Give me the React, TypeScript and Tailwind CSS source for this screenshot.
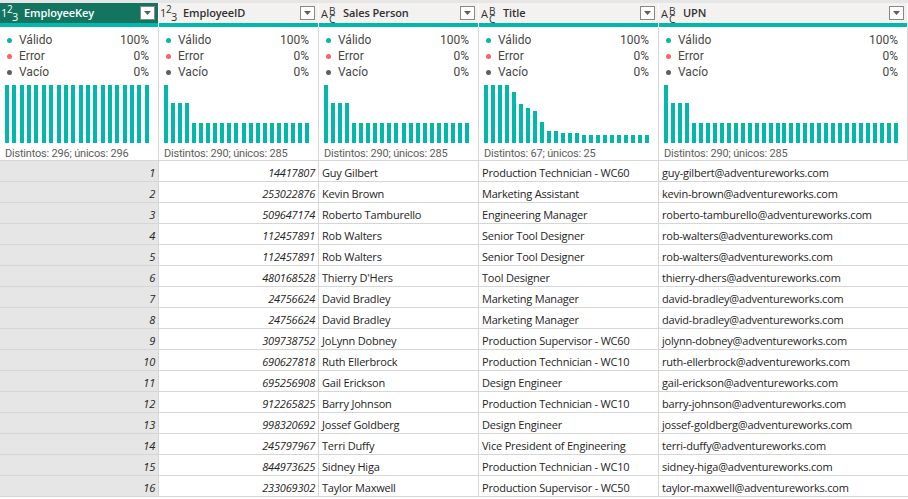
import React from "react";

const TEAL = "#01b8aa";

type Col = {
  name: string;
  type: "num" | "text";
  distinct: string;
  bars: number[];
};

const low = (n: number) => Array.from({ length: n }, () => 0.35);

const cols: Col[] = [
  { name: "EmployeeKey", type: "num", distinct: "Distintos: 296; únicos: 296", bars: Array.from({ length: 20 }, () => 1) },
  { name: "EmployeeID", type: "num", distinct: "Distintos: 290; únicos: 285", bars: [1, 0.69, 0.69, 0.69, ...low(17)] },
  { name: "Sales Person", type: "text", distinct: "Distintos: 290; únicos: 285", bars: [1, 0.69, 0.69, 0.69, ...low(17)] },
  {
    name: "Title",
    type: "text",
    distinct: "Distintos: 67; únicos: 25",
    bars: [1, 1, 1, 1, 0.88, 0.67, 0.6, 0.55, 0.37, 0.21, 0.21, 0.17, 0.17, 0.17, 0.13, 0.13, 0.13, 0.13, 0.13, 0.13, 0.13, 0.13, 0.13, 0.13],
  },
  { name: "UPN", type: "text", distinct: "Distintos: 290; únicos: 285", bars: [1, 0.69, 0.69, 0.69, ...low(30)] },
];

const rows: [string, string, string, string][] = [
  ["14417807", "Guy Gilbert", "Production Technician - WC60", "guy-gilbert@adventureworks.com"],
  ["253022876", "Kevin Brown", "Marketing Assistant", "kevin-brown@adventureworks.com"],
  ["509647174", "Roberto Tamburello", "Engineering Manager", "roberto-tamburello@adventureworks.com"],
  ["112457891", "Rob Walters", "Senior Tool Designer", "rob-walters@adventureworks.com"],
  ["112457891", "Rob Walters", "Senior Tool Designer", "rob-walters@adventureworks.com"],
  ["480168528", "Thierry D'Hers", "Tool Designer", "thierry-dhers@adventureworks.com"],
  ["24756624", "David Bradley", "Marketing Manager", "david-bradley@adventureworks.com"],
  ["24756624", "David Bradley", "Marketing Manager", "david-bradley@adventureworks.com"],
  ["309738752", "JoLynn Dobney", "Production Supervisor - WC60", "jolynn-dobney@adventureworks.com"],
  ["690627818", "Ruth Ellerbrock", "Production Technician - WC10", "ruth-ellerbrock@adventureworks.com"],
  ["695256908", "Gail Erickson", "Design Engineer", "gail-erickson@adventureworks.com"],
  ["912265825", "Barry Johnson", "Production Technician - WC10", "barry-johnson@adventureworks.com"],
  ["998320692", "Jossef Goldberg", "Design Engineer", "jossef-goldberg@adventureworks.com"],
  ["245797967", "Terri Duffy", "Vice President of Engineering", "terri-duffy@adventureworks.com"],
  ["844973625", "Sidney Higa", "Production Technician - WC10", "sidney-higa@adventureworks.com"],
  ["233069302", "Taylor Maxwell", "Production Supervisor - WC50", "taylor-maxwell@adventureworks.com"],
];

const GRID = "grid grid-cols-[159px_160px_160px_180px_1fr]";
const UI_FONT = { fontFamily: "'Open Sans', 'Noto Sans', sans-serif" };
const DIN_FONT = { fontFamily: "Roboto, 'Noto Sans', sans-serif" };

function TypeIcon({ type, selected }: { type: "num" | "text"; selected: boolean }) {
  const c = selected ? "text-white" : "text-[#323130]";
  if (type === "num") {
    return (
      <span className={`relative shrink-0 block w-[22px] h-[20px] ${c}`} style={UI_FONT}>
        <span className="absolute left-[1px] top-[6px] text-[11px] leading-[8px]">1</span>
        <span className="absolute left-[7px] top-[3px] text-[10px] leading-[7px]">2</span>
        <span className="absolute left-[12px] top-[10px] text-[11px] leading-[8px]">3</span>
      </span>
    );
  }
  return (
    <span className={`relative shrink-0 block w-[22px] h-[20px] ${c}`} style={UI_FONT}>
      <span className="absolute left-[2px] top-[7px] text-[11px] leading-[8px]">A</span>
      <span className="absolute left-[10px] top-[4px] text-[10px] leading-[8px] whitespace-pre text-center">{"B\nC"}</span>
    </span>
  );
}

function Dropdown() {
  return (
    <div className="shrink-0 w-[15px] h-[14px] bg-white border border-[#8a8886] flex items-center justify-center">
      <svg width="7" height="4" viewBox="0 0 7 4">
        <path d="M0 0 L7 0 L3.5 4 Z" fill="#605e5c" />
      </svg>
    </div>
  );
}

export default function App() {
  return (
    <div className="w-[908px] h-[499px] overflow-hidden bg-white text-[#252423]" style={UI_FONT}>
      {/* header */}
      <div className={`${GRID} bg-[#e6e6e6] pt-[3px]`}>
        {cols.map((c, i) => {
          const sel = i === 0;
          return (
            <div key={c.name} className="border-r border-white flex flex-col">
              <div className={`h-[20px] flex items-center pr-[3px] ${sel ? "bg-[#13755f]" : "bg-[#f3f2f1]"}`}>
                <TypeIcon type={c.type} selected={sel} />
                <span
                  className={`ml-[2px] flex-1 text-[11px] font-semibold tracking-[-0.1px] whitespace-nowrap ${sel ? "text-white" : "text-[#323130]"}`}
                >
                  {c.name}
                </span>
                <Dropdown />
              </div>
              <div className="h-[4px]" style={{ background: TEAL }} />
            </div>
          );
        })}
      </div>
      {/* profile */}
      <div className={GRID}>
        {cols.map((c) => (
          <div
            key={c.name}
            className="h-[134px] border-r border-b border-[#d6d6d6] flex flex-col pl-[5px] pr-[9px] pt-[5px]"
            style={DIN_FONT}
          >
            {[
              ["Válido", "100%", TEAL],
              ["Error", "0%", "#fd625e"],
              ["Vacío", "0%", "#605e5c"],
            ].map(([l, p, col]) => (
              <div key={l} className="h-[16px] flex items-center text-[12px] text-[#484644]">
                <span className="w-[5px] h-[5px] rounded-full ml-[2px] mr-[7px]" style={{ background: col }} />
                <span className="flex-1">{l}</span>
                <span>{p}</span>
              </div>
            ))}
            <div className="mt-[5px] h-[58px] flex items-end justify-between">
              {c.bars.map((h, j) => (
                <div key={j} className="w-[4px]" style={{ height: `${Math.round(h * 58)}px`, background: TEAL }} />
              ))}
            </div>
            <div className="mt-[4px] h-[14px] leading-[14px] text-[11px] tracking-[-0.2px] text-[#605e5c] whitespace-nowrap">
              {c.distinct}
            </div>
          </div>
        ))}
      </div>
      {/* rows */}
      {rows.map((r, i) => (
        <div key={i} className={`${GRID} h-[21px] text-[11px] tracking-[-0.2px] leading-[17px]`}>
          <div className="bg-[#e6e6e6] border-r border-b border-[#d6d6d6] pt-[3px] text-right pr-[3px] italic">{i + 1}</div>
          <div className="border-r border-b border-[#d6d6d6] pt-[3px] text-right pr-[3px] italic">{r[0]}</div>
          <div className="border-r border-b border-[#d6d6d6] pt-[3px] pl-[3px] whitespace-nowrap overflow-hidden">{r[1]}</div>
          <div className="border-r border-b border-[#d6d6d6] pt-[3px] pl-[3px] whitespace-nowrap overflow-hidden">{r[2]}</div>
          <div className="border-b border-[#d6d6d6] pt-[3px] pl-[3px] whitespace-nowrap overflow-hidden">{r[3]}</div>
        </div>
      ))}
    </div>
  );
}
